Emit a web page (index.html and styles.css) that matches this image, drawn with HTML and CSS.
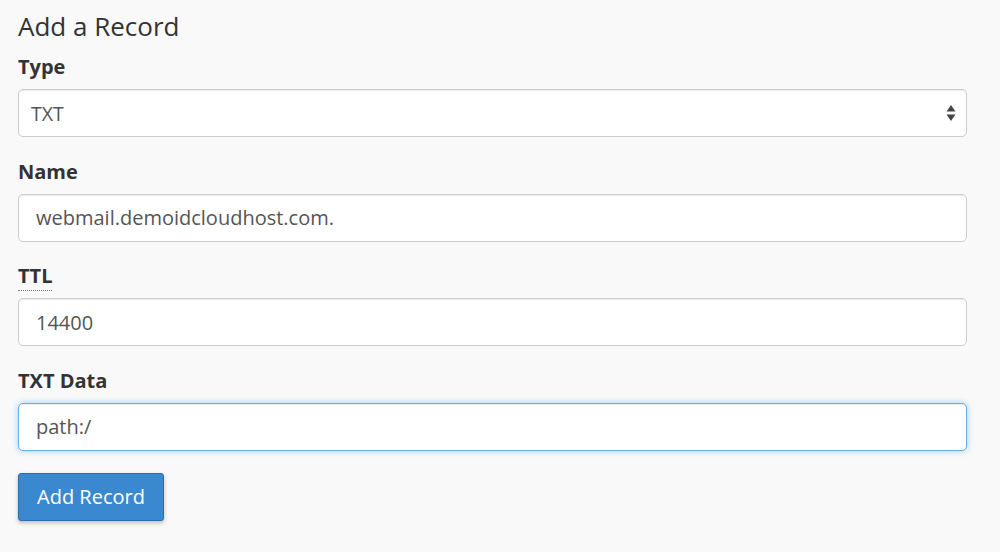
FILE: index.html
```html
<!DOCTYPE html>
<html>
<head>
<meta charset="utf-8">
<link rel="stylesheet" href="styles.css">
</head>
<body>
<div class="page">
  <h1 class="title">Add a Record</h1>
  <div class="field">
    <label class="label">Type</label>
    <div class="select">
      <span class="select-text">TXT</span>
      <svg class="arrows" width="10" height="18" viewBox="0 0 10 18"><path d="M5 1 L9.5 7.5 H0.5 Z" fill="#444"/><path d="M5 17 L9.5 10.5 H0.5 Z" fill="#444"/></svg>
    </div>
  </div>
  <div class="field">
    <label class="label">Name</label>
    <div class="input">webmail.demoidcloudhost.com.</div>
  </div>
  <div class="field">
    <label class="label"><abbr class="abbr">TTL</abbr></label>
    <div class="input">14400</div>
  </div>
  <div class="field">
    <label class="label">TXT Data</label>
    <div class="input focus">path:/</div>
  </div>
  <button class="btn">Add Record</button>
</div>
</body>
</html>
```

FILE: styles.css
```css
html, body {
  margin: 0;
  padding: 0;
  background: #f9f9f9;
}
body {
  font-family: "Open Sans", "Liberation Sans", sans-serif;
  color: #333;
  width: 1000px;
  height: 552px;
  overflow: hidden;
}
.page {
  padding: 0 33px 0 18px;
  display: flex;
  flex-direction: column;
}
.title {
  margin: 9px 0 0 0;
  font-size: 26px;
  font-weight: 400;
  line-height: 34px;
  color: #333;
}
.field {
  display: flex;
  flex-direction: column;
}
.label {
  font-weight: 700;
  font-size: 20px;
  line-height: 26px;
  margin-top: 11px;
  margin-bottom: 9px;
  color: #333;
}
.field + .field .label {
  margin-top: 21.5px;
}
.abbr {
  text-decoration: none;
  border-bottom: 1px dotted #777;
  padding-bottom: 1px;
}
.select, .input {
  box-sizing: border-box;
  height: 48px;
  background: #fff;
  border: 1px solid #ccc;
  border-radius: 5px;
  display: flex;
  align-items: center;
  font-size: 20px;
  color: #555;
  box-shadow: inset 0 1px 1px rgba(0,0,0,0.075);
}
.select {
  padding: 0 10px 0 12px;
  justify-content: space-between;
  font-size: 19.5px;
}
.input {
  padding: 0 17px;
}
.input.focus {
  border-color: #66afe9;
  box-shadow: inset 0 1px 1px rgba(0,0,0,0.075), 0 0 6px rgba(102,175,233,0.6);
}
.btn {
  align-self: flex-start;
  margin-top: 22px;
  height: 48px;
  padding: 0 18px;
  font-family: "Open Sans", "Liberation Sans", sans-serif;
  font-size: 20px;
  color: #fff;
  background: #3a89d0;
  border: 1px solid #2b6eb0;
  border-radius: 3px;
  box-shadow: 0 2px 4px rgba(0,0,0,0.25);
}
```
